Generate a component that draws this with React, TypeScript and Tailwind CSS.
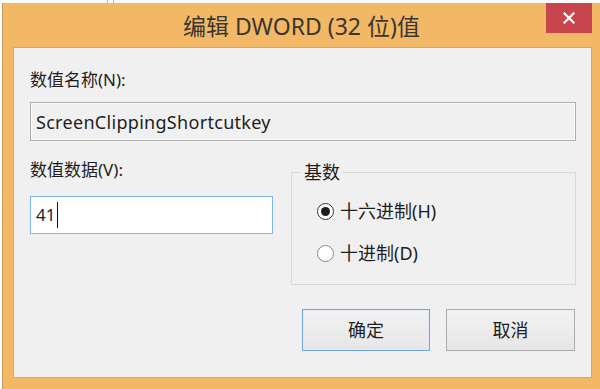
import React from 'react';

const font = { fontFamily: '"Noto Sans", "Noto Sans CJK SC", sans-serif' };

const Radio: React.FC<{ checked?: boolean; label: string }> = ({ checked, label }) => (
  <div className="h-[24px] flex items-center gap-[6px]">
    <span
      className={`w-[17px] h-[17px] rounded-full border bg-white flex items-center justify-center ${
        checked ? 'border-[#333333]' : 'border-[#8a8a8a]'
      }`}
    >
      {checked && <span className="w-[9px] h-[9px] rounded-full bg-[#1b1b1b]" />}
    </span>
    <span className="text-[18px] leading-[24px] text-[#1e1e1e]">{label}</span>
  </div>
);

export default function App() {
  return (
    <div className="w-[600px] h-[389px] bg-white flex flex-col overflow-hidden" style={font}>
      {/* window behind */}
      <div className="h-[3px] shrink-0 flex bg-[#fbfbfb]">
        <div className="w-[107px]" />
        <div className="w-px bg-[#b5b5b5]" />
        <div className="w-[5px]" />
        <div className="w-px bg-[#b5b5b5]" />
      </div>

      <div className="flex-1 ml-[2px] bg-[#f2b866] border-l border-[#c89a58] relative flex flex-col">
        {/* title bar */}
        <div className="h-[44px] shrink-0 flex items-center justify-center">
          <span className="text-[23px] leading-[28px] text-[#3a3631] pt-[1px]">编辑 DWORD (32 位)值</span>
        </div>
        <button className="absolute top-0 right-[8px] w-[46px] h-[30px] bg-[#c7454c] flex items-center justify-center">
          <svg width="12" height="12" viewBox="0 0 12 12">
            <path d="M1.5 1.5 L10.5 10.5 M10.5 1.5 L1.5 10.5" stroke="#ffffff" strokeWidth="2.2" strokeLinecap="square" />
          </svg>
        </button>

        {/* client area */}
        <div className="flex-1 ml-[10px] mr-[8px] mb-[11px] bg-[#f0f0f0] border border-[#d6a865] flex flex-col pl-[16px] pt-[21px]">
          <div className="text-[17px] leading-[22px] text-[#1e1e1e]">数值名称(N):</div>
          <div className="mt-[11px] w-[546px] h-[39px] border border-[#adadad] bg-[#f0f0f0] shadow-[inset_0_0_0_1px_#fafafa] flex items-center pl-[5px]">
            <span className="text-[18px] leading-[22px] tracking-[0.3px] text-[#1e1e1e]">ScreenClippingShortcutkey</span>
          </div>

          <div className="mt-[18px] flex">
            <div className="w-[243px] flex flex-col">
              <div className="text-[17px] leading-[22px] text-[#1e1e1e]">数值数据(V):</div>
              <div className="mt-[15px] h-[38px] border border-[#7eb4ea] bg-white flex items-center pl-[5px]">
                <span className="text-[17px] leading-[22px] text-[#1e1e1e]">41</span>
                <span className="ml-[2px] w-px h-[26px] bg-[#111111]" />
              </div>
            </div>

            <fieldset className="ml-[18px] mt-[1px] w-[285px] h-[125px] border border-[#d9d9d9] pl-[9px]">
              <legend className="px-[3px] text-[18px] leading-[24px] text-[#1e1e1e]">基数</legend>
              <div className="pl-[16px] pt-[15px] flex flex-col gap-[18px]">
                <Radio checked label="十六进制(H)" />
                <Radio label="十进制(D)" />
              </div>
            </fieldset>
          </div>

          <div className="mt-[24px] flex justify-end gap-[16px] pr-[16px]">
            <button className="w-[128px] h-[42px] border border-[#6fa6dc] bg-gradient-to-b from-[#f2f2f2] to-[#e6e6e6] shadow-[inset_0_0_0_1px_#e0eaf5] text-[18px] text-[#1e1e1e]">
              确定
            </button>
            <button className="w-[129px] h-[42px] border border-[#acacac] bg-gradient-to-b from-[#f2f2f2] to-[#e6e6e6] text-[18px] text-[#1e1e1e]">
              取消
            </button>
          </div>
        </div>
      </div>
    </div>
  );
}
